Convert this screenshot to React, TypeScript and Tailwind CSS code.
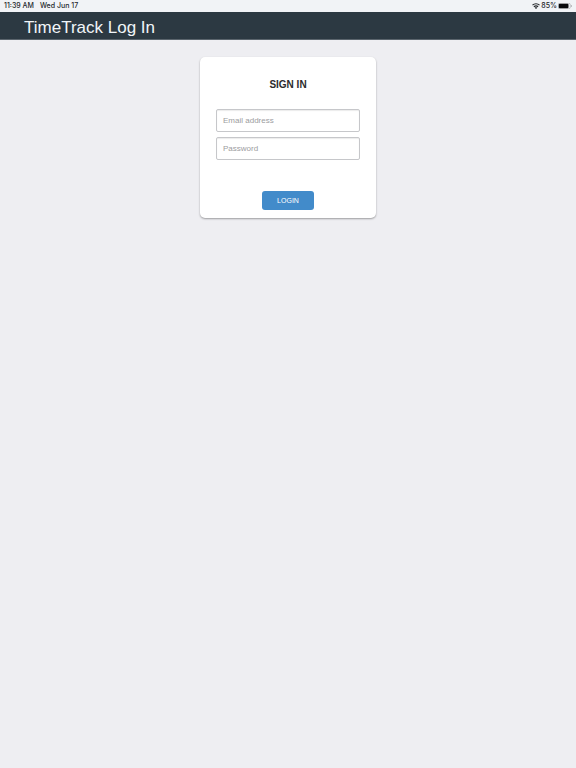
import { useState } from 'react'
import type { FormEvent } from 'react'

const WifiIcon = () => (
  <svg viewBox="0 0 16 12" className="w-2 h-1.5" aria-hidden="true">
    <g fill="none" stroke="currentColor" strokeWidth="2.4">
      <path d="M1 4.3C5 .6 11 .6 15 4.3" />
      <path d="M3.8 7.4c2.4-2.1 6-2.1 8.4 0" />
    </g>
    <path d="M8 12 5.4 9.3c1.5-1.2 3.7-1.2 5.2 0z" fill="currentColor" />
  </svg>
)

const BatteryIcon = () => (
  <svg viewBox="0 0 28 12" className="w-3.5 h-1.5" aria-hidden="true">
    <rect x="0.5" y="0.5" width="24" height="11" rx="3" fill="none" stroke="#8e9093" />
    <rect x="1.5" y="1.5" width="19.5" height="9" rx="2" fill="#08090b" />
    <path d="M26 4c2.2.6 2.2 3.4 0 4z" fill="#8e9093" />
  </svg>
)

const StatusBar = () => (
  <div className="flex h-3 items-center justify-between bg-[#f1f3f6] pl-1 pr-1 text-[7px] font-medium leading-3 text-[#24272b] font-['Inter','Liberation_Sans',sans-serif]">
    <div className="flex gap-1.5">
      <span>11:39 AM</span>
      <span>Wed Jun 17</span>
    </div>
    <div className="flex items-center gap-px">
      <WifiIcon />
      <span>85%</span>
      <BatteryIcon />
    </div>
  </div>
)

interface FieldProps {
  type: string
  label: string
  value: string
  onChange: (value: string) => void
}

const Field = ({ type, label, value, onChange }: FieldProps) => (
  <input
    type={type}
    aria-label={label}
    placeholder={label}
    value={value}
    onChange={(e) => onChange(e.target.value)}
    className="block h-[23px] w-full rounded-xs border border-[#c6c7ca] bg-white px-1.5 text-[8px] text-[#333] shadow-[inset_0_1px_1px_rgba(0,0,0,0.08)] placeholder:text-[#9c9ca0]"
  />
)

const LoginForm = () => {
  const [email, setEmail] = useState('')
  const [password, setPassword] = useState('')

  const handleSubmit = (e: FormEvent) => {
    e.preventDefault()
  }

  return (
    <form
      onSubmit={handleSubmit}
      className="mx-auto mt-[17px] w-full max-w-44 rounded-[5px] bg-white px-4 pb-2 pt-5 shadow-[0_1px_2px_rgba(0,0,0,0.35)]"
    >
      <h2 className="text-center text-[10px] font-bold leading-4 text-[#2b2b2d]">SIGN IN</h2>
      <div className="mt-4 space-y-[5px]">
        <Field type="email" label="Email address" value={email} onChange={setEmail} />
        <Field type="password" label="Password" value={password} onChange={setPassword} />
      </div>
      <button
        type="submit"
        className="mx-auto mt-[31px] block h-[19px] w-[52px] cursor-pointer rounded-[3px] bg-[#428bca] pt-px text-[7px] text-white"
      >
        LOGIN
      </button>
    </form>
  )
}

const App = () => (
  <div className="min-h-screen bg-[#eeeef2] font-['Liberation_Sans',Arial,sans-serif]">
    <StatusBar />
    <header className="flex h-7 items-center border-b border-[#5b656d] bg-[#2c3942] px-6 pt-1">
      <h1 className="text-[17px] leading-6 text-[#f1f5f8]">TimeTrack Log In</h1>
    </header>
    <main className="px-4">
      <LoginForm />
    </main>
  </div>
)

export default App
